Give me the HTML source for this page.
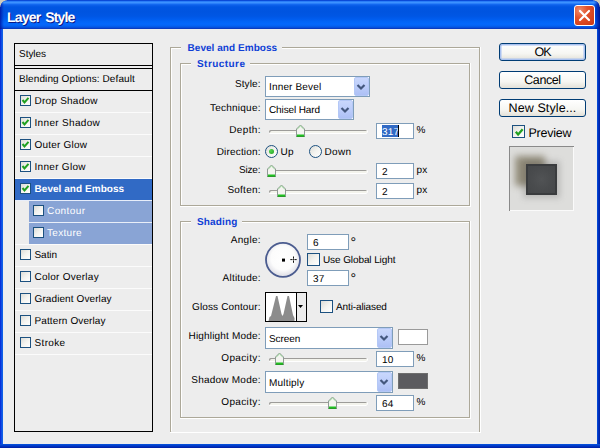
<!DOCTYPE html>
<html><head><meta charset="utf-8"><title>Layer Style</title>
<style>
html,body{margin:0;padding:0;background:#ededed;}
body{text-rendering:geometricPrecision;width:600px;height:448px;overflow:hidden;position:relative;font-family:"Liberation Sans", sans-serif;font-size:11px;color:#000;}
#win{position:absolute;left:0;top:0;width:600px;height:448px;background:#ededed;overflow:hidden;}
.abs,#win div,#win span,#win svg{position:absolute;}
#title{left:0;top:0;width:600px;height:29px;background:linear-gradient(to bottom,#0a4ad8 0.5px,#2a7ef8 1.5px,#3c92ff 2.5px,#2a80fa 3.5px,#1268f0 4.5px,#0a5ee8 5.5px,#0056e2 7px,#0054e0 12px,#0056e4 16px,#005cee 19px,#0264f6 21.5px,#0468fc 24px,#0462f2 26px,#0650dc 27.5px,#0a3cc0 28.5px);}
#tl{left:0;top:0;width:7px;height:7px;background:radial-gradient(circle at 7px 7px,transparent 6.3px,#cfcbbd 7px);}
#tr{left:593px;top:0;width:7px;height:7px;background:radial-gradient(circle at 0px 7px,transparent 6.3px,#cfcbbd 7px);}
#ttext{left:7px;top:6px;transform:translateY(0.6px);height:20px;line-height:20px;font-weight:bold;font-size:14px;color:#fff;letter-spacing:-0.82px;word-spacing:1.8px;text-shadow:1px 1px 0 #0a1883;white-space:nowrap;}
#bl{left:0;top:29px;width:3px;height:419px;background:linear-gradient(to right,#0831d9 0,#0831d9 1px,#166aee 2px,#0855dd 3px);}
#br{left:597px;top:29px;width:3px;height:419px;background:linear-gradient(to right,#0855dd 0,#0037c8 1px,#001ea0 3px);}
#bb{left:0;top:444px;width:600px;height:4px;background:linear-gradient(to bottom,#0855dd 0,#0037c8 2px,#001ea0 4px);}
#close{left:574px;top:5px;width:19px;height:19px;border:1px solid #fff;border-radius:3px;background:radial-gradient(circle at 25% 22%,#ee8c6c 0,#e2522c 38%,#cb3612 100%);}
.t{white-space:nowrap;line-height:14px;height:14px;font-size:10px;letter-spacing:0.15px;text-rendering:geometricPrecision;}
.r{text-align:right;}
.b{font-weight:bold;letter-spacing:0;}
.blue{color:#0f3fd6;}
.w{color:#fff;}
#list{left:14px;top:43px;width:137px;height:387px;border:1px solid #000;background:#ededed;}
.hl{background:#000;height:1px;left:15px;width:137px;}
.sep{background:#fbfbfb;height:1px;left:15px;width:137px;}
.cb{width:9px;height:9px;border:1px solid #1c5180;background:linear-gradient(135deg,#dcdcd7 0,#f3f3ef 50%,#fff 100%);}
.cb13{width:11px;height:11px;border:1px solid #1c5180;background:linear-gradient(135deg,#dcdcd7 0,#f3f3ef 50%,#fff 100%);}
.ed{background:#fff;border:1px solid #7f9db9;height:14px;}
.sel{background:#fff;border:1px solid #7f9db9;}
.ddb{border:1px solid #b4c8f6;border-radius:2px;background:linear-gradient(to bottom,#c9d7fc 0,#bccdfa 50%,#adc0f5 100%);}
.gd{background:#aca899;}
.gw{background:#fff;}
.btn{left:499px;width:85px;height:16px;border:1px solid #003c74;border-radius:3px;background:linear-gradient(to bottom,#fff 0,#f6f6f2 60%,#e3e1d8 100%);text-align:center;font-size:12.5px;line-height:17px;letter-spacing:-0.4px;}
</style></head>
<body><div id="win">
<div id="title"></div><div style="left:0;top:0;width:4px;height:29px;background:linear-gradient(to right,rgba(0,10,150,.75),rgba(0,10,150,.35) 2px,rgba(0,10,150,0) 4px)"></div><div style="left:594px;top:0;width:6px;height:29px;background:linear-gradient(to left,rgba(0,10,130,.85),rgba(0,10,150,.5) 3px,rgba(0,10,150,0) 6px)"></div><div id="tl"></div><div id="tr"></div>
<span id="ttext">Layer Style</span>
<div id="close"><svg width="19" height="19" viewBox="0 0 19 19" style="left:0;top:0"><path d="M5 5 L14 14 M14 5 L5 14" stroke="#fff" stroke-width="2.2" stroke-linecap="round" fill="none"/></svg></div>
<div id="bl"></div><div id="br"></div><div id="bb"></div>
<div id="list"></div>
<span class="t " style="left:19px;top:48px;letter-spacing:-0.03px;">Styles</span>
<div class="hl" style="top:65px"></div><div class="hl" style="top:68px"></div>
<span class="t " style="left:19px;top:73px;letter-spacing:0.10px;">Blending Options: Default</span>
<div class="hl" style="top:90px"></div>
<div class="cb" style="left:20px;top:95px"></div>
<svg width="11" height="11" viewBox="0 0 11 11" style="left:20px;top:95px"><path d="M2.5 5.0 L4.5 7.4 L8.5 2.8" stroke="#21a121" stroke-width="2.0" fill="none"/></svg>
<span class="t " style="left:34.5px;top:95px;letter-spacing:0.24px;">Drop Shadow</span>
<div class="sep" style="top:112px;"></div>
<div class="cb" style="left:20px;top:117px"></div>
<svg width="11" height="11" viewBox="0 0 11 11" style="left:20px;top:117px"><path d="M2.5 5.0 L4.5 7.4 L8.5 2.8" stroke="#21a121" stroke-width="2.0" fill="none"/></svg>
<span class="t " style="left:34.5px;top:117px;letter-spacing:0.33px;">Inner Shadow</span>
<div class="sep" style="top:134px;"></div>
<div class="cb" style="left:20px;top:139px"></div>
<svg width="11" height="11" viewBox="0 0 11 11" style="left:20px;top:139px"><path d="M2.5 5.0 L4.5 7.4 L8.5 2.8" stroke="#21a121" stroke-width="2.0" fill="none"/></svg>
<span class="t " style="left:34.5px;top:139px;letter-spacing:0.21px;">Outer Glow</span>
<div class="sep" style="top:156px;"></div>
<div class="cb" style="left:20px;top:161px"></div>
<svg width="11" height="11" viewBox="0 0 11 11" style="left:20px;top:161px"><path d="M2.5 5.0 L4.5 7.4 L8.5 2.8" stroke="#21a121" stroke-width="2.0" fill="none"/></svg>
<span class="t " style="left:34.5px;top:161px;letter-spacing:0.30px;">Inner Glow</span>
<div class="sep" style="top:178px;"></div>
<div style="left:15px;top:179px;width:137px;height:21px;background:#316ac5"></div>
<div class="cb" style="left:20px;top:183px"></div>
<svg width="11" height="11" viewBox="0 0 11 11" style="left:20px;top:183px"><path d="M2.5 5.0 L4.5 7.4 L8.5 2.8" stroke="#21a121" stroke-width="2.0" fill="none"/></svg>
<span class="t b w" style="left:34.5px;top:183px;letter-spacing:0.05px;">Bevel and Emboss</span>
<div class="sep" style="top:200px;background:#e8eefa;"></div>
<div style="left:29px;top:201px;width:123px;height:21px;background:#89a4d5"></div>
<div class="cb" style="left:33px;top:205px"></div>
<span class="t w" style="left:47px;top:205px;letter-spacing:0.42px;">Contour</span>
<div class="sep" style="top:222px;background:#e9eef8;left:29px;width:123px;"></div>
<div style="left:29px;top:223px;width:123px;height:21px;background:#89a4d5"></div>
<div class="cb" style="left:33px;top:227px"></div>
<span class="t w" style="left:47px;top:227px;letter-spacing:0.30px;">Texture</span>
<div class="sep" style="top:244px;"></div>
<div class="cb" style="left:20px;top:249px"></div>
<span class="t " style="left:34.5px;top:249px;letter-spacing:-0.05px;">Satin</span>
<div class="sep" style="top:266px;"></div>
<div class="cb" style="left:20px;top:271px"></div>
<span class="t " style="left:34.5px;top:271px;letter-spacing:0.25px;">Color Overlay</span>
<div class="sep" style="top:288px;"></div>
<div class="cb" style="left:20px;top:293px"></div>
<span class="t " style="left:34.5px;top:293px;letter-spacing:0.10px;">Gradient Overlay</span>
<div class="sep" style="top:310px;"></div>
<div class="cb" style="left:20px;top:315px"></div>
<span class="t " style="left:34.5px;top:315px;letter-spacing:0.11px;">Pattern Overlay</span>
<div class="sep" style="top:332px;"></div>
<div class="cb" style="left:20px;top:337px"></div>
<span class="t " style="left:34.5px;top:337px;letter-spacing:0.34px;">Stroke</span>
<div class="sep" style="top:354px;"></div>
<div class="gd" style="left:170px;top:47px;width:11px;height:1px"></div>
<div class="gw" style="left:171px;top:48px;width:10px;height:1px"></div>
<div class="gd" style="left:282px;top:47px;width:198px;height:1px"></div>
<div class="gw" style="left:282px;top:48px;width:197px;height:1px"></div>
<div class="gd" style="left:170px;top:47px;width:1px;height:385px"></div>
<div class="gw" style="left:171px;top:48px;width:1px;height:383px"></div>
<div class="gd" style="left:479px;top:47px;width:1px;height:385px"></div>
<div class="gw" style="left:480px;top:47px;width:1px;height:386px"></div>
<div class="gw" style="left:170px;top:432px;width:311px;height:1px"></div>
<span class="t b blue" style="left:187.5px;top:42px;letter-spacing:0.05px;">Bevel and Emboss</span>
<div class="gd" style="left:180px;top:63px;width:11px;height:1px"></div>
<div class="gw" style="left:181px;top:64px;width:10px;height:1px"></div>
<div class="gd" style="left:250px;top:63px;width:220px;height:1px"></div>
<div class="gw" style="left:250px;top:64px;width:219px;height:1px"></div>
<div class="gd" style="left:180px;top:63px;width:1px;height:143px"></div>
<div class="gw" style="left:181px;top:64px;width:1px;height:141px"></div>
<div class="gd" style="left:469px;top:63px;width:1px;height:143px"></div>
<div class="gw" style="left:470px;top:63px;width:1px;height:144px"></div>
<div class="gd" style="left:180px;top:205px;width:290px;height:1px"></div>
<div class="gw" style="left:180px;top:206px;width:291px;height:1px"></div>
<span class="t b blue" style="left:197px;top:58px;letter-spacing:0.44px;">Structure</span>
<div class="gd" style="left:180px;top:221px;width:11px;height:1px"></div>
<div class="gw" style="left:181px;top:222px;width:10px;height:1px"></div>
<div class="gd" style="left:242px;top:221px;width:228px;height:1px"></div>
<div class="gw" style="left:242px;top:222px;width:227px;height:1px"></div>
<div class="gd" style="left:180px;top:221px;width:1px;height:197px"></div>
<div class="gw" style="left:181px;top:222px;width:1px;height:195px"></div>
<div class="gd" style="left:469px;top:221px;width:1px;height:197px"></div>
<div class="gw" style="left:470px;top:221px;width:1px;height:198px"></div>
<div class="gd" style="left:180px;top:417px;width:290px;height:1px"></div>
<div class="gw" style="left:180px;top:418px;width:291px;height:1px"></div>
<span class="t b blue" style="left:197px;top:216px;letter-spacing:0.16px;">Shading</span>
<span class="t r " style="right:339.38px;top:78px;letter-spacing:0.12px;">Style:</span>
<span class="t r " style="right:339.25px;top:102px;letter-spacing:0.25px;">Technique:</span>
<span class="t r " style="right:339.13px;top:124px;letter-spacing:0.37px;">Depth:</span>
<span class="t r " style="right:339.32px;top:146px;letter-spacing:0.18px;">Direction:</span>
<span class="t r " style="right:339.66px;top:164px;letter-spacing:-0.16px;">Size:</span>
<span class="t r " style="right:339.27px;top:184px;letter-spacing:0.23px;">Soften:</span>
<span class="t r " style="right:339.23px;top:234px;letter-spacing:0.27px;">Angle:</span>
<span class="t r " style="right:339.27px;top:272px;letter-spacing:0.23px;">Altitude:</span>
<span class="t r " style="right:339.36px;top:301px;letter-spacing:0.14px;">Gloss Contour:</span>
<span class="t r " style="right:339.32px;top:330px;letter-spacing:0.18px;">Highlight Mode:</span>
<span class="t r " style="right:339.13px;top:352px;letter-spacing:0.37px;">Opacity:</span>
<span class="t r " style="right:339.27px;top:374px;letter-spacing:0.23px;">Shadow Mode:</span>
<span class="t r " style="right:339.13px;top:396px;letter-spacing:0.37px;">Opacity:</span>
<div class="sel" style="left:265px;top:76px;width:103px;height:19px"></div>
<div class="ddb" style="left:354px;top:77px;width:13px;height:17px"></div>
<svg width="12" height="10" viewBox="0 0 12 10" style="left:354.5px;top:81.5px"><path d="M2.5 3 L6 6.5 L9.5 3" stroke="#44587e" stroke-width="2.2" fill="none"/></svg>
<span class="t " style="left:269px;top:81px;letter-spacing:0.16px;">Inner Bevel</span>
<div class="sel" style="left:265px;top:99px;width:87px;height:19px"></div>
<div class="ddb" style="left:338px;top:100px;width:13px;height:17px"></div>
<svg width="12" height="10" viewBox="0 0 12 10" style="left:338.5px;top:104.5px"><path d="M2.5 3 L6 6.5 L9.5 3" stroke="#44587e" stroke-width="2.2" fill="none"/></svg>
<span class="t " style="left:269px;top:104px;letter-spacing:-0.12px;">Chisel Hard</span>
<div class="sel" style="left:265px;top:327px;width:126px;height:20px"></div>
<div class="ddb" style="left:377px;top:328px;width:13px;height:18px"></div>
<svg width="12" height="10" viewBox="0 0 12 10" style="left:377.5px;top:333.0px"><path d="M2.5 3 L6 6.5 L9.5 3" stroke="#44587e" stroke-width="2.2" fill="none"/></svg>
<span class="t " style="left:269px;top:333px;letter-spacing:-0.08px;">Screen</span>
<div class="sel" style="left:265px;top:371px;width:126px;height:20px"></div>
<div class="ddb" style="left:377px;top:372px;width:13px;height:18px"></div>
<svg width="12" height="10" viewBox="0 0 12 10" style="left:377.5px;top:377.0px"><path d="M2.5 3 L6 6.5 L9.5 3" stroke="#44587e" stroke-width="2.2" fill="none"/></svg>
<span class="t " style="left:269px;top:377px;letter-spacing:0.20px;">Multiply</span>
<div style="left:269px;top:130px;width:98px;height:3px;border-radius:2px;background:#f3f3ec;box-shadow:inset 1px 1px 0 #9d9c99, 0 1px 0 #fff, 1px 0 0 #fff"></div>
<svg width="11" height="14" viewBox="0 0 11 14" style="left:295px;top:124px"><path d="M1.5 5 L5.5 1 L9.5 5 L9.5 12.5 L1.5 12.5 Z" fill="#f4f4f0" stroke="#8f9a94" stroke-width="1"/><path d="M2.3 5 L5.5 1.9 L8.7 5" fill="none" stroke="#8fd08f" stroke-width="1"/><path d="M2 10.5 H9 V12.5 H2 Z" fill="#21c021"/><path d="M1.5 12.5 H9.5" stroke="#2a9a2a" stroke-width="1"/></svg>
<div style="left:269px;top:170px;width:98px;height:3px;border-radius:2px;background:#f3f3ec;box-shadow:inset 1px 1px 0 #9d9c99, 0 1px 0 #fff, 1px 0 0 #fff"></div>
<svg width="11" height="14" viewBox="0 0 11 14" style="left:266px;top:164px"><path d="M1.5 5 L5.5 1 L9.5 5 L9.5 12.5 L1.5 12.5 Z" fill="#f4f4f0" stroke="#8f9a94" stroke-width="1"/><path d="M2.3 5 L5.5 1.9 L8.7 5" fill="none" stroke="#8fd08f" stroke-width="1"/><path d="M2 10.5 H9 V12.5 H2 Z" fill="#21c021"/><path d="M1.5 12.5 H9.5" stroke="#2a9a2a" stroke-width="1"/></svg>
<div style="left:269px;top:190px;width:98px;height:3px;border-radius:2px;background:#f3f3ec;box-shadow:inset 1px 1px 0 #9d9c99, 0 1px 0 #fff, 1px 0 0 #fff"></div>
<svg width="11" height="14" viewBox="0 0 11 14" style="left:276px;top:184px"><path d="M1.5 5 L5.5 1 L9.5 5 L9.5 12.5 L1.5 12.5 Z" fill="#f4f4f0" stroke="#8f9a94" stroke-width="1"/><path d="M2.3 5 L5.5 1.9 L8.7 5" fill="none" stroke="#8fd08f" stroke-width="1"/><path d="M2 10.5 H9 V12.5 H2 Z" fill="#21c021"/><path d="M1.5 12.5 H9.5" stroke="#2a9a2a" stroke-width="1"/></svg>
<div style="left:269px;top:358px;width:98px;height:3px;border-radius:2px;background:#f3f3ec;box-shadow:inset 1px 1px 0 #9d9c99, 0 1px 0 #fff, 1px 0 0 #fff"></div>
<svg width="11" height="14" viewBox="0 0 11 14" style="left:274px;top:352px"><path d="M1.5 5 L5.5 1 L9.5 5 L9.5 12.5 L1.5 12.5 Z" fill="#f4f4f0" stroke="#8f9a94" stroke-width="1"/><path d="M2.3 5 L5.5 1.9 L8.7 5" fill="none" stroke="#8fd08f" stroke-width="1"/><path d="M2 10.5 H9 V12.5 H2 Z" fill="#21c021"/><path d="M1.5 12.5 H9.5" stroke="#2a9a2a" stroke-width="1"/></svg>
<div style="left:269px;top:402px;width:98px;height:3px;border-radius:2px;background:#f3f3ec;box-shadow:inset 1px 1px 0 #9d9c99, 0 1px 0 #fff, 1px 0 0 #fff"></div>
<svg width="11" height="14" viewBox="0 0 11 14" style="left:326.5px;top:396px"><path d="M1.5 5 L5.5 1 L9.5 5 L9.5 12.5 L1.5 12.5 Z" fill="#f4f4f0" stroke="#8f9a94" stroke-width="1"/><path d="M2.3 5 L5.5 1.9 L8.7 5" fill="none" stroke="#8fd08f" stroke-width="1"/><path d="M2 10.5 H9 V12.5 H2 Z" fill="#21c021"/><path d="M1.5 12.5 H9.5" stroke="#2a9a2a" stroke-width="1"/></svg>
<div class="ed" style="left:376px;top:123px;width:36px;height:14px"></div>
<div style="left:381.5px;top:125px;width:16px;height:12px;background:#316ac5"></div>
<span class="t w" style="left:382px;top:126px;">317</span>
<div style="left:397.5px;top:125px;width:1px;height:12px;background:#000"></div>
<span class="t " style="left:416.5px;top:124px;">%</span>
<div class="ed" style="left:376px;top:163px;width:36px;height:14px"></div>
<span class="t " style="left:382px;top:166px;">2</span>
<span class="t " style="left:416.5px;top:164px;">px</span>
<div class="ed" style="left:376px;top:183px;width:36px;height:14px"></div>
<span class="t " style="left:382px;top:186px;">2</span>
<span class="t " style="left:416.5px;top:184px;">px</span>
<div class="ed" style="left:307px;top:234px;width:40px;height:14px"></div>
<span class="t " style="left:313px;top:237px;">6</span>
<span class="t " style="left:350.5px;top:235px;font-size:14px">°</span>
<div class="ed" style="left:307px;top:270px;width:40px;height:14px"></div>
<span class="t " style="left:313px;top:273px;">37</span>
<span class="t " style="left:350.5px;top:271px;font-size:14px">°</span>
<div class="ed" style="left:376px;top:351px;width:36px;height:14px"></div>
<span class="t " style="left:382px;top:354px;">10</span>
<span class="t " style="left:416.5px;top:352px;">%</span>
<div class="ed" style="left:376px;top:395px;width:36px;height:14px"></div>
<span class="t " style="left:382px;top:398px;">64</span>
<span class="t " style="left:416.5px;top:396px;">%</span>
<div style="left:265px;top:145px;width:11px;height:11px;border:1px solid #1c5180;border-radius:50%;background:linear-gradient(135deg,#dcdcd7 0,#f3f3ef 50%,#fff 100%)"></div>
<div style="left:269px;top:149px;width:5px;height:5px;border-radius:50%;background:radial-gradient(circle at 35% 35%,#55d551,#21a121)"></div>
<span class="t " style="left:280.5px;top:146px;letter-spacing:0.30px;">Up</span>
<div style="left:309px;top:145px;width:11px;height:11px;border:1px solid #1c5180;border-radius:50%;background:linear-gradient(135deg,#dcdcd7 0,#f3f3ef 50%,#fff 100%)"></div>
<span class="t " style="left:324.5px;top:146px;letter-spacing:0.31px;">Down</span>
<svg width="40" height="40" viewBox="0 0 40 40" style="left:263px;top:240px"><defs><radialGradient id="dg" cx="50%" cy="45%" r="50%"><stop offset="0" stop-color="#fff"/><stop offset="0.7" stop-color="#fcfcfc"/><stop offset="1" stop-color="#e4e4ea"/></radialGradient></defs><circle cx="20" cy="19.8" r="17" fill="url(#dg)" stroke="#4b5c8f" stroke-width="1.8"/><rect x="19" y="18.6" width="3" height="3" fill="#000"/><path d="M30.5 16.5 V18.7 M30.5 20.5 V22.8 M27.3 19.6 H29.6 M31.4 19.6 H33.7" stroke="#111" stroke-width="1" fill="none"/><rect x="30" y="19.1" width="1" height="1" fill="#111"/></svg>
<div class="cb13" style="left:307px;top:253px"></div>
<span class="t " style="left:323px;top:254px;letter-spacing:-0.10px;">Use Global Light</span>
<div style="left:265px;top:292px;width:40px;height:28px;border:1px solid #000;background:#fff"></div>
<svg width="30" height="28" viewBox="0 0 30 28" style="left:266px;top:293px"><path d="M2.5 28 L3.5 24 L5 23 L10 3 L11.5 3 L15.5 21 L16.5 23 L17.5 21 L21.5 3 L23 3 L27 22 L28.5 25 L28.5 28 Z" fill="#8c8c8c"/></svg>
<div style="left:296px;top:293px;width:1px;height:28px;background:#000"></div>
<div style="left:297px;top:293px;width:9px;height:28px;background:#ececec"></div>
<svg width="5" height="3" viewBox="0 0 5 3" style="left:298px;top:305px"><path d="M0 0 H5 L2.5 3 Z" fill="#000"/></svg>
<div class="cb13" style="left:320px;top:300px"></div>
<span class="t " style="left:336px;top:301px;letter-spacing:-0.12px;">Anti-aliased</span>
<div style="left:398px;top:329px;width:28px;height:14px;border:1px solid #9a9a9a;background:#fff"></div>
<div style="left:398px;top:373px;width:28px;height:14px;border:1px solid #6e6e6e;background:#5b5b5f"></div>
<div class="btn" style="top:43px;box-shadow:inset 0 0 0 1.5px #a9c1f0;letter-spacing:-1px">OK</div>
<div class="btn" style="top:71px">Cancel</div>
<div class="btn" style="top:99px;letter-spacing:0.1px">New Style...</div>
<div class="cb13" style="left:512px;top:125px"></div>
<svg width="12.5" height="12.5" viewBox="0 0 12.5 12.5" style="left:512.5px;top:125.5px"><path d="M2.840909090909091 5.681818181818182 L5.113636363636363 8.409090909090908 L9.659090909090908 3.1818181818181817" stroke="#21a121" stroke-width="2.272727272727273" fill="none"/></svg>
<span class="t" style="left:528.5px;top:126px;font-size:12.5px;letter-spacing:-0.25px">Preview</span>
<div style="left:509px;top:146px;width:65px;height:65px;background:#dddddb;box-shadow:inset 1px 1px 0 #8a8a8a, inset -1px -1px 0 #fafafa;overflow:hidden"><div style="left:6px;top:10px;width:30px;height:30px;background:#746c54;filter:blur(3.5px);opacity:.7"></div><div style="left:14px;top:15px;width:37px;height:37px;background:rgba(60,60,60,.22);filter:blur(3px)"></div><div style="left:17px;top:18px;width:31px;height:31px;background:radial-gradient(circle at 50% 50%,#515355 0,#494b4d 50%,#444648 100%);box-shadow:inset 0 0 0 2px #3a3c3e, inset 0 0 0 1px #2f3133"></div></div>
</div></body></html>
